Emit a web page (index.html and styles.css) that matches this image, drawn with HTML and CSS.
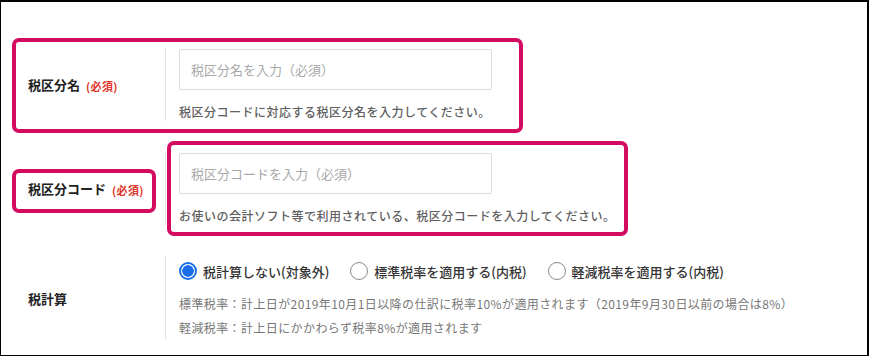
FILE: index.html
```html
<!DOCTYPE html>
<html lang="ja">
<head>
<meta charset="utf-8">
<link rel="stylesheet" href="styles.css">
</head>
<body>
<div class="frame">
  <div class="row row-name">
    <div class="label"><span class="label-text">税区分名</span><span class="req">(必須)</span></div>
    <div class="field">
      <div class="input"><span class="ph">税区分名を入力（必須）</span></div>
      <p class="help">税区分コードに対応する税区分名を入力してください。</p>
    </div>
    <span class="hl hl-a"></span>
  </div>

  <div class="row row-code">
    <div class="label"><span class="label-text">税区分コード</span><span class="req">(必須)</span></div>
    <div class="field">
      <div class="input"><span class="ph">税区分コードを入力（必須）</span></div>
      <p class="help">お使いの会計ソフト等で利用されている、税区分コードを入力してください。</p>
    </div>
    <span class="hl hl-b"></span>
    <span class="hl hl-c"></span>
  </div>

  <div class="row row-calc">
    <div class="label"><span class="label-text">税計算</span></div>
    <div class="field">
      <div class="radios">
        <label class="radio"><span class="dot checked"></span>税計算しない(対象外)</label>
        <label class="radio"><span class="dot"></span>標準税率を適用する(内税)</label>
        <label class="radio"><span class="dot"></span>軽減税率を適用する(内税)</label>
      </div>
      <p class="note">標準税率：計上日が2019年10月1日以降の仕訳に税率10%が適用されます（2019年9月30日以前の場合は8%）</p>
      <p class="note">軽減税率：計上日にかかわらず税率8%が適用されます</p>
    </div>
  </div>
</div>
</body>
</html>
```

FILE: styles.css
```css
* { box-sizing: border-box; }
html, body { margin: 0; padding: 0; background: #fff; }
body {
  font-family: "Noto Sans CJK JP", "Noto Sans", sans-serif;
  color: #333;
}
.frame {
  width: 869px;
  height: 356px;
  border: 1px solid #000;
  border-top-width: 2px;
  border-right-width: 2px;
  padding-top: 46px;
  display: flex;
  flex-direction: column;
  gap: 31px;
  overflow: hidden;
}
.row {
  position: relative;
  display: flex;
}
.label {
  width: 165px;
  flex: none;
  display: flex;
  align-items: center;
  padding-left: 27px;
  border-right: 1px solid #e3e3e3;
}
.label-text {
  font-size: 13px;
  font-weight: 700;
  color: #222;
}
.req {
  font-size: 11px;
  font-weight: 700;
  color: #e0352b;
  margin-left: 6px;
  margin-top: 2px;
  letter-spacing: 0.4px;
}
.field {
  padding-left: 13px;
  padding-top: 1px;
}
.input {
  width: 313px;
  height: 41px;
  border: 1px solid #dcdcdc;
  border-radius: 2px;
  display: flex;
  align-items: center;
  padding-left: 11px;
}
.ph {
  font-size: 13px;
  color: #a8a8a8;
}
.help {
  margin: 13px 0 0;
  font-size: 12px;
  line-height: 18px;
  color: #606060;
  font-weight: 500;
  letter-spacing: 0.5px;
  white-space: nowrap;
}
.hl {
  position: absolute;
  border: 4px solid #d40c61;
  border-radius: 7px;
  pointer-events: none;
}
.hl-a { left: 11px; top: -10px; width: 511px; height: 95px; }
.hl-b { left: 166px; top: -11px; width: 461px; height: 95px; }
.hl-c { left: 11px; top: 17px; width: 144px; height: 44px; }

.radios {
  display: flex;
  gap: 21px;
  height: 24px;
  align-items: center;
  margin-top: 2px;
  margin-bottom: 9px;
}
.radio {
  display: flex;
  align-items: center;
  font-size: 13px;
  font-weight: 500;
  color: #333;
}
.dot {
  width: 18px;
  height: 18px;
  border-radius: 50%;
  border: 1px solid #8a8a8a;
  margin-right: 6px;
  background: #fff;
}
.dot.checked {
  border: 2px solid #1a6ee8;
  background: radial-gradient(circle, #1a6ee8 0 5.5px, #fff 6px);
}
.note {
  margin: 0;
  font-size: 12px;
  line-height: 24px;
  color: #777;
  letter-spacing: 0.4px;
  white-space: nowrap;
}
```
